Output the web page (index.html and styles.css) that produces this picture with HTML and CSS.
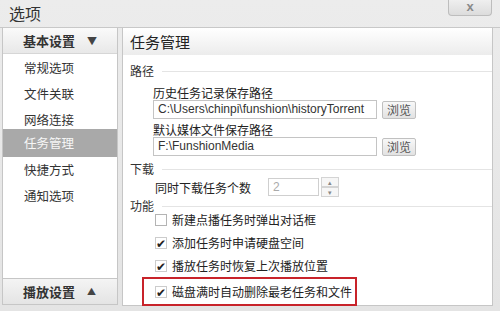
FILE: index.html
```html
<!DOCTYPE html>
<html lang="zh-CN">
<head>
    <meta charset="UTF-8">
    <title>选项</title>
    <link rel="stylesheet" href="styles.css">
</head>
<body>
    <div class="window">
        <div class="titlebar">
            <span class="title">选项</span>
            <div class="close">x</div>
        </div>
        <div class="main">
            <div class="side">
                <div class="side-head">基本设置 <span class="arrow">▼</span></div>
                <div class="side-list">
                    <div class="side-item">常规选项</div>
                    <div class="side-item">文件关联</div>
                    <div class="side-item">网络连接</div>
                    <div class="side-item active">任务管理</div>
                    <div class="side-item">快捷方式</div>
                    <div class="side-item">通知选项</div>
                </div>
                <div class="side-foot">播放设置 <span class="arrow small">▲</span></div>
            </div>
            <div class="content">
                <div class="content-head">任务管理</div>
                <div class="group first"><span>路径</span><i class="rule"></i></div>
                <div class="label">历史任务记录保存路径</div>
                <div class="field-row">
                    <div class="input">C:\Users\chinpi\funshion\historyTorrent</div>
                    <div class="btn">浏览</div>
                </div>
                <div class="label">默认媒体文件保存路径</div>
                <div class="field-row">
                    <div class="input">F:\FunshionMedia</div>
                    <div class="btn">浏览</div>
                </div>
                <div class="group download"><span>下载</span><i class="rule"></i></div>
                <div class="spin-row">
                    <span>同时下载任务个数</span>
                    <div class="spin">2</div>
                    <div class="spin-btns"><b>▴</b><b>▾</b></div>
                </div>
                <div class="group func"><span>功能</span><i class="rule"></i></div>
                <div class="check"><span class="box"></span>新建点播任务时弹出对话框</div>
                <div class="check"><span class="box on">✔</span>添加任务时申请硬盘空间</div>
                <div class="check"><span class="box on">✔</span>播放任务时恢复上次播放位置</div>
                <div class="check marked"><span class="box on">✔</span>磁盘满时自动删除最老任务和文件</div>
            </div>
        </div>
    </div>
</body>
</html>
```

FILE: styles.css
```css
body { margin: 0; font-family: "Noto Sans CJK SC", "Liberation Sans", sans-serif; font-size: 12px; color: #222; background: #e8e8e8; }
.window { width: 500px; height: 311px; background: linear-gradient(#ececec, #e4e4e4); overflow: hidden; }
.titlebar { height: 27px; display: flex; align-items: flex-start; justify-content: space-between; border-bottom: 1px solid #c8c8c8; }
.title { font-size: 16px; line-height: 20px; padding: 3px 0 0 9px; color: #333; }
.close { width: 42px; height: 15px; margin-right: 8px; border: 1px solid #bdbdbd; border-top: none; border-radius: 0 0 4px 4px; background: linear-gradient(#efefef, #dcdcdc); text-align: center; font: bold 13px/14px "Liberation Sans", sans-serif; color: #8a8a8a; }
.main { display: flex; gap: 4px; padding: 0 7px 0 2px; height: 278px; }
.side { width: 114px; display: flex; flex-direction: column; border: 1px solid #c6c6c6; border-top: none; background: #fff; height: 276px; }
.side-head, .side-foot { height: 25px; display: flex; align-items: center; gap: 12px; padding-left: 20px; font-size: 13px; font-weight: bold; color: #333; }
.side-head { border-bottom: 1px solid #d6d6d6; background: linear-gradient(#fafafa, #e8e8e8); }
.side-foot { border-top: 1px solid #c6c6c6; background: linear-gradient(#f4f4f4, #e4e4e4); }
.arrow { font-size: 10px; color: #444; }
.arrow.small { font-size: 9px; }
.side-list { flex: 1; padding-top: 1px; }
.side-item { height: 26px; line-height: 26px; padding-left: 21px; font-size: 12.5px; color: #333; }
.side-item.active { background: #a9a9a9; color: #f6f6f6; height: 28px; line-height: 28px; margin-top: -4px; }
.content { flex: 1; border: 1px solid #c6c6c6; border-top: none; background: #fff; height: 277px; }
.content-head { height: 27px; line-height: 27px; padding-left: 7px; font-size: 15px; color: #222; background: linear-gradient(#ffffff, #ececec); }
.group { display: flex; align-items: center; gap: 8px; padding-left: 7px; height: 18px; color: #333; }
.group.first { margin-top: 5px; height: 20px; }
.group.download { margin-top: 3px; }
.group.func { height: 16px; }
.group .rule { flex: 1; border-top: 1px solid #e4e4e4; margin-top: 2px; }
.label { padding-left: 30px; height: 14px; line-height: 14px; margin-top: 4px; }
.group.first + .label { margin-top: 6px; }
.field-row { display: flex; align-items: center; gap: 5px; padding-left: 30px; height: 19px; }
.input { width: 218px; height: 17px; line-height: 17px; border: 1px solid #c4c4c4; padding-left: 4px; font-family: "Liberation Sans", sans-serif; font-size: 12px; color: #333; white-space: nowrap; overflow: hidden; }
.btn { width: 32px; height: 16px; line-height: 16px; border: 1px solid #c0c0c0; border-radius: 2px; background: linear-gradient(#f8f8f8, #e2e2e2); text-align: center; font-size: 12px; color: #555; }
.spin-row { display: flex; align-items: center; padding-left: 32px; height: 20px; }
.spin-row span { width: 113px; }
.spin { width: 45px; height: 16px; line-height: 16px; border: 1px solid #cfcfcf; padding-left: 4px; color: #aaa; font-family: "Liberation Sans", sans-serif; font-size: 12px; }
.spin-btns { display: flex; flex-direction: column; margin-left: 2px; }
.spin-btns b { width: 16px; height: 8px; border: 1px solid #d4d4d4; font-size: 7px; line-height: 8px; text-align: center; color: #888; font-weight: normal; background: #f6f6f6; }
.group + .check { margin-top: -5px; }
.check { display: flex; align-items: center; gap: 5px; padding-left: 32px; height: 23px; color: #222; }
.box { width: 10px; height: 10px; border: 1px solid #b4b4b4; font-size: 12px; line-height: 9px; text-align: center; color: #222; }
.box.on { border-color: #cccccc; }
.check.marked { margin-left: 19px; padding-left: 11px; width: 200px; height: 25px; border: 2px solid #c8232a; }
```
